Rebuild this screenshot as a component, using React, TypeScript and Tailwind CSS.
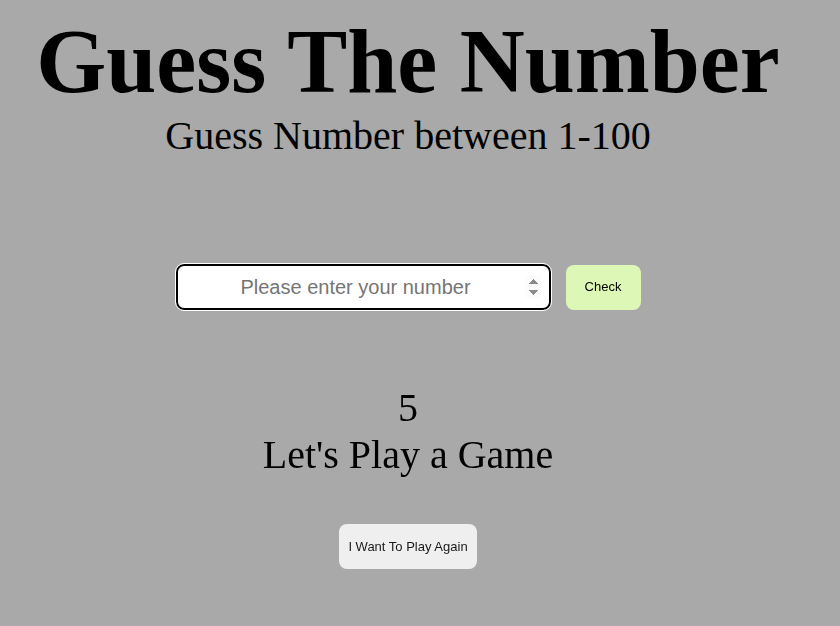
import React, { useState } from 'react';

const App: React.FC = () => {
  const [guess, setGuess] = useState('');
  const [count] = useState(5);
  const [message] = useState("Let's Play a Game");

  return (
    <div className="min-h-screen w-full bg-[#a9a9a9] font-['Liberation_Serif',serif] text-black">
      <div className="w-[816px] flex flex-col items-center">
        <h1 className="mt-[12px] text-[90px] leading-[100px] font-bold">Guess The Number</h1>
        <h2 className="mt-[2px] text-[40px] leading-[44px]">Guess Number between 1-100</h2>

        {/* guess form */}
        <div className="mt-[106px] flex items-center gap-[15px]">
          <input
            type="number"
            autoFocus
            value={guess}
            onChange={(e) => setGuess(e.target.value)}
            placeholder="Please enter your number"
            className="w-[375px] h-[46px] px-2 rounded-lg border-2 border-black bg-white outline outline-1 outline-white text-center text-[20px] font-['Liberation_Sans',sans-serif] placeholder:text-[#757575] focus:outline focus:outline-1 focus:outline-white"
          />
          <button className="w-[75px] h-[45px] rounded-lg bg-[#ddf8b6] text-[13px] font-['Liberation_Sans',sans-serif] text-black">
            Check
          </button>
        </div>

        <div className="mt-[74px] text-[40px] leading-[47px] text-center">
          <div>{count}</div>
          <div>{message}</div>
        </div>

        <button className="mt-[46px] w-[138px] h-[45px] rounded-lg bg-[#efefef] text-[13px] font-['Liberation_Sans',sans-serif] text-[#1a1a1a]">
          I Want To Play Again
        </button>
      </div>
    </div>
  );
};

export default App;
